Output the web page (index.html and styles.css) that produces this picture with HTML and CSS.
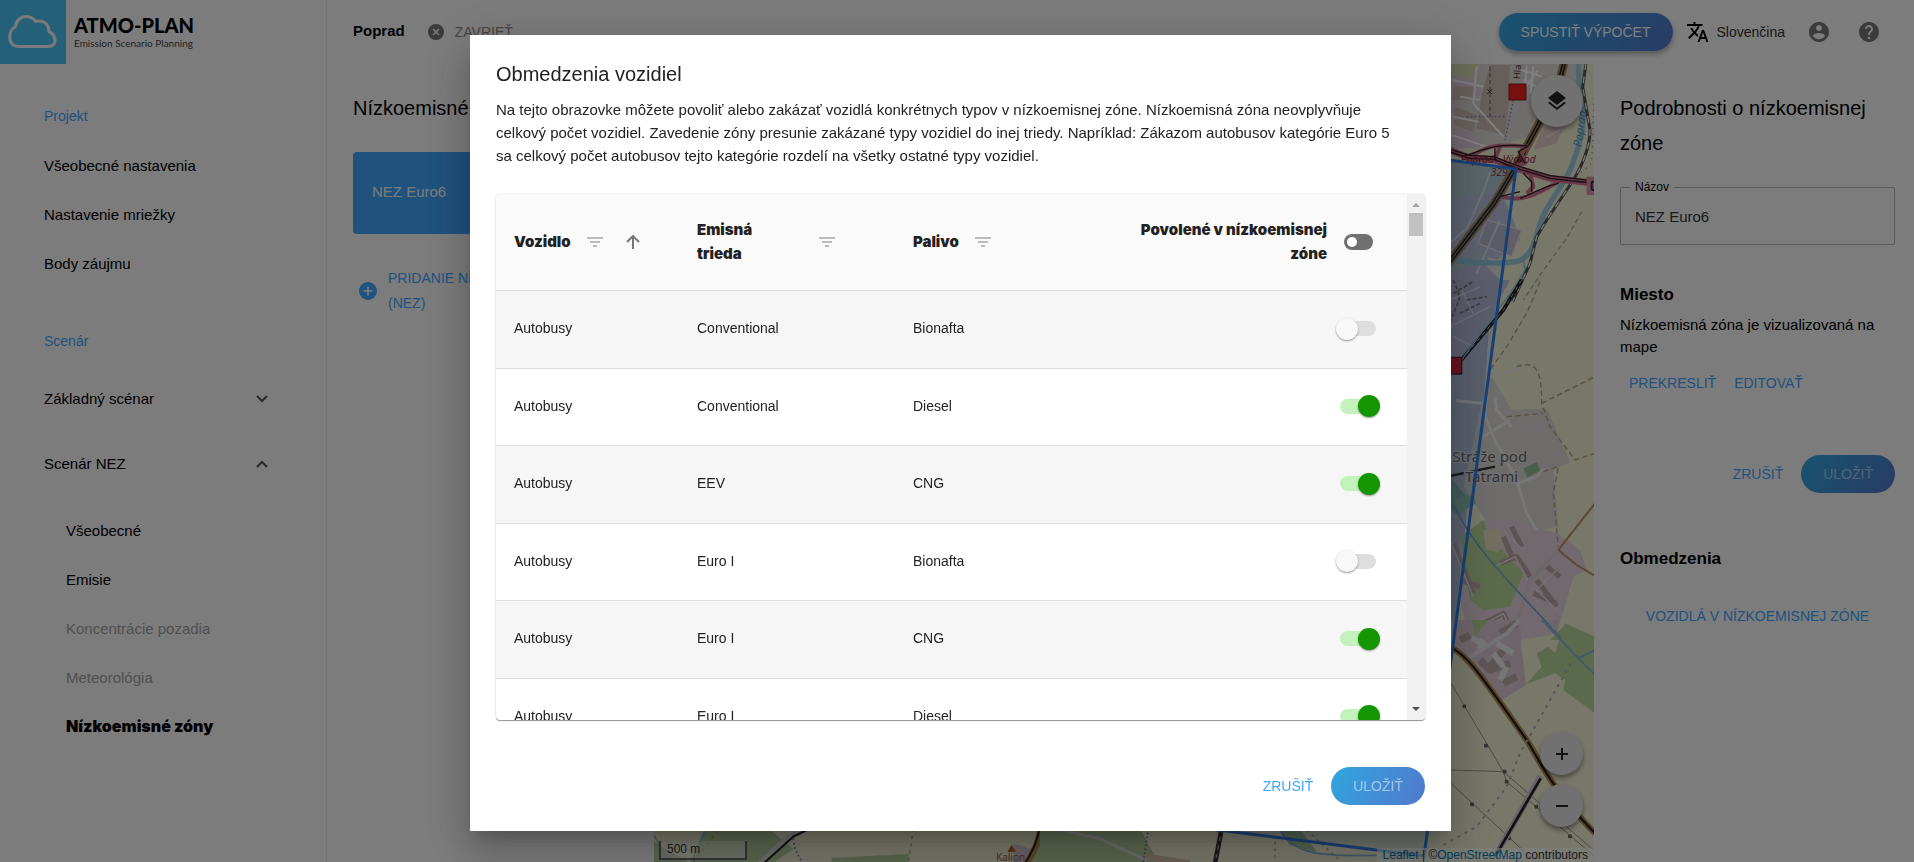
FILE: index.html
```html
<!DOCTYPE html>
<html lang="sk">
<head>
<meta charset="utf-8">
<title>ATMO-PLAN</title>
<link rel="stylesheet" href="styles.css">
</head>
<body>
<div class="app">
  <aside class="sidebar">
    <div class="brand">
      <svg class="brand-mark" viewBox="0 0 66 64" aria-hidden="true"><rect width="66" height="64" fill="#48c0f0"/><path d="M19 46.500C12 46.500 9.500 41.500 9.800 36.500C10 31 13 28 15.500 26.500C16 20.500 21 16.500 26 16.500C30.500 16.500 34 19 36 21.500C43.500 19.500 48.500 24 49 31.500C53 33.500 55 36.500 55 40.500C55 44.500 52 46.500 48 46.500Z" fill="none" stroke="#f4f4f4" stroke-width="3.200" stroke-linejoin="round"/></svg>
      <div class="brand-text">
        <span class="brand-name">ATMO-PLAN</span>
        <span class="brand-sub">Emission Scenario Planning</span>
      </div>
    </div>
    <nav class="nav">
      <span class="nav-group">Projekt</span>
      <a href="#" class="nav-link">Všeobecné nastavenia</a>
      <a href="#" class="nav-link">Nastavenie mriežky</a>
      <a href="#" class="nav-link">Body záujmu</a>
      <span class="nav-group nav-group-next">Scenár</span>
      <button class="nav-toggle" type="button">Základný scénar <svg viewBox="0 0 12 8" aria-hidden="true"><path d="M1 1l5 5 5-5"/></svg></button>
      <button class="nav-toggle" type="button">Scenár NEZ <svg viewBox="0 0 12 8" aria-hidden="true"><path d="M1 7l5-5 5 5"/></svg></button>
      <div class="nav-sub">
        <a href="#" class="nav-link">Všeobecné</a>
        <a href="#" class="nav-link">Emisie</a>
        <a class="nav-link nav-disabled">Koncentrácie pozadia</a>
        <a class="nav-link nav-disabled">Meteorológia</a>
        <a href="#" class="nav-link nav-current">Nízkoemisné zóny</a>
      </div>
    </nav>
  </aside>
  <div class="content">
    <header class="topbar">
      <strong class="project">Poprad</strong>
      <button class="close-project" type="button"><svg viewBox="0 0 16 16" aria-hidden="true"><circle cx="8" cy="8" r="8" fill="#777"/><path d="M5 5l6 6M11 5l-6 6" stroke="#f8f8f8" stroke-width="1.500"/></svg>ZAVRIEŤ</button>
      <div class="topbar-right">
        <button class="btn-pill btn-raised" type="button">SPUSTIŤ VÝPOČET</button>
        <button class="language" type="button"><svg viewBox="2 2 20 20" aria-hidden="true"><path d="M12.870 15.070l-2.540-2.510.03-.03c1.740-1.940 2.980-4.170 3.710-6.530H17V4h-7V2H8v2H1v1.990h11.170C11.500 7.920 10.440 9.750 9 11.350 8.070 10.320 7.300 9.190 6.690 8h-2c.73 1.630 1.730 3.170 2.980 4.560l-5.090 5.020L4 19l5-5 3.110 3.110.76-2.040zM18.500 10h-2L12 22h2l1.120-3h4.750L21 22h2l-4.500-12zm-2.620 7l1.620-4.330L19.120 17h-3.240z"/></svg>Slovenčina</button>
        <button class="icon-btn" type="button" aria-label="Účet"><svg viewBox="2 2 20 20" aria-hidden="true"><path d="M12 2C6.480 2 2 6.480 2 12s4.480 10 10 10 10-4.480 10-10S17.520 2 12 2zm0 3c1.660 0 3 1.340 3 3s-1.340 3-3 3-3-1.340-3-3 1.340-3 3-3zm0 14.200c-2.500 0-4.710-1.280-6-3.220.03-1.990 4-3.080 6-3.080 1.990 0 5.970 1.090 6 3.080-1.290 1.940-3.500 3.220-6 3.220z"/></svg></button>
        <button class="icon-btn" type="button" aria-label="Pomoc"><svg viewBox="2 2 20 20" aria-hidden="true"><path d="M12 2C6.480 2 2 6.480 2 12s4.480 10 10 10 10-4.480 10-10S17.520 2 12 2zm1 17h-2v-2h2v2zm2.070-7.750l-.9.920C13.450 12.900 13 13.500 13 15h-2v-.5c0-1.100.45-2.100 1.170-2.830l1.240-1.260c.37-.36.590-.86.590-1.410 0-1.100-.9-2-2-2s-2 .9-2 2H8c0-2.210 1.790-4 4-4s4 1.790 4 4c0 .88-.36 1.680-.93 2.250z"/></svg></button>
      </div>
    </header>
    <main class="workspace">
      <section class="zones">
        <h1 class="heading">Nízkoemisné zóny</h1>
        <button class="zone-card" type="button">NEZ Euro6</button>
        <button class="zone-add" type="button"><svg viewBox="0 0 18 18" aria-hidden="true"><circle cx="9" cy="9" r="9" fill="#40a4ff"/><path d="M9 4.500v9M4.500 9h9" stroke="#f8f8f8" stroke-width="1.600"/></svg><span>PRIDANIE NÍZKOEMISNEJ ZÓNY (NEZ)</span></button>
      </section>
      <section class="map">
        <svg class="map-canvas" viewBox="654 64 940 798" preserveAspectRatio="xMaxYMin slice" aria-hidden="true">
          <rect x="654" y="64" width="940" height="798" fill="#eeeed4"/>
          <!-- north-east -->
          <g transform="translate(1440 0) scale(.33333)" fill="none" stroke-linejoin="round">
            <path d="M0 190H440L430 330L300 400L200 430L0 450Z" fill="#dedad6"/>
            <path d="M0 190H120L90 230L30 225Z" fill="#d8e0b4"/>
            <path d="M30 225L110 245L120 290L50 300L90 400L140 440L0 450Z" fill="#e4d2e0"/>
            <path d="M150 195h60l-5 120l-10 90l-85-20l15-100z" fill="#ccbcb4"/>
            <path d="M40 260h60v40H40zM45 320l65 25-12 50-55-20z" fill="#d0c2ba"/>
            <path d="M40 240l90 20M60 290l60 10M40 350l75 15M110 200l-10 110 90 100M225 300l70-90M245 210l60 20M250 240l50 25M260 200l-8 100M280 200l-8 80M20 400l120 40" stroke="#fff" stroke-width="6"/>
            <path d="M320 360l70-20-40 90-70 20z" fill="#e4ccc8"/>
            <path d="M0 480L225 510L180 600L120 900H0Z" fill="#bcd0cc"/>
            <path d="M30 600l150-30 40 90 20 60-70 60-60-20-90 60z" fill="#c6c8dc"/>
            <path d="M0 820l130-30 50 50v60H0z" fill="#c8c2dc"/>
            <path d="M140 660l105 30-30 80-100-40z" fill="#c4bcc8" stroke="#e4e4ec" stroke-width="4"/>
            <path d="M150 515l-20 60-50 110-80 70M280 410l70-60M320 410l60-30M180 660l-70 160" stroke="#e6e6ea" stroke-width="6"/>
            <path d="M415 190c0 40 0 70 10 120c15 70-10 130-30 190c-20 50-75 110-95 170c-15 50-20 90-60 112c-40 10-120 10-230-5" stroke="#9accdc" stroke-width="16"/>
            <path d="M250 780l5 30-55 90" stroke="#9accdc" stroke-width="5"/>
            <path d="M438 190l-10 70 22 130c0 50-20 100-50 150l-80 120-30 50-20 80-52 115" stroke="#555" stroke-width="9"/>
            <path d="M438 190l-10 70 22 130c0 50-20 100-50 150l-80 120-30 50-20 80-52 115" stroke="#eee" stroke-width="4" stroke-dasharray="20 20"/>
            <path d="M372 190l-20 80-60 110-70 130-60 100-160 210" stroke="#b08a50" stroke-width="26"/>
            <path d="M372 190l-20 80-60 110-70 130-60 100-160 210" stroke="#222" stroke-width="13"/>
            <path d="M372 190l-20 80-60 110-70 130-60 100-160 210" stroke="#776" stroke-width="4"/>
            <path d="M30 450L90 475L160 478L240 508L330 535L465 550" stroke="#d0708c" stroke-width="20"/>
            <path d="M90 470C140 440 160 430 265 440L245 460L255 490L210 500L165 478L180 440M185 590C240 605 280 590 355 545L270 520L280 560L260 580" stroke="#d0708c" stroke-width="12"/>
            <path d="M30 456L90 475L160 478L240 508L330 535L465 550M30 448L90 466L160 470L240 500L330 527L465 543M75 468C140 445 170 430 265 438L235 455L255 490M165 445V478L210 500M180 590L240 575M355 550C310 560 280 580 240 595M250 520L275 545L275 575" stroke="#2c1c22" stroke-width="4"/>
            <path d="M440 530h25v55h-25z" fill="#e090a8"/>
            <path d="M455 545v25M455 545h10M455 570h10" stroke="#333" stroke-width="6"/>
            <path d="M425 635l-45 80-80 110-50 75" stroke="#b8a890" stroke-width="4" stroke-dasharray="14 10"/>
            <path d="M465 240l-10 250-70 60" stroke="#998" stroke-width="4" stroke-dasharray="4 14"/>
            <path d="M220 300l-25 120M80 350h120" stroke="#7878c8" stroke-width="4" stroke-dasharray="5 7"/>
            <path d="M150 200v150" stroke="#777" stroke-width="4" stroke-dasharray="12 8"/>
            <path d="M142 268l14 14M156 268l-14 14" stroke="#333" stroke-width="3"/>
            <text x="240" y="238" transform="rotate(-86 240 238)" font-size="28" fill="#554030">Hla</text>
            <text x="424" y="442" transform="rotate(-82 424 442)" font-size="34" font-style="italic" fill="#5a90b4">Poprad</text>
            <text x="62" y="490" font-size="31" font-style="italic" fill="#98283e">Poprad - Východ</text>
            <text x="152" y="528" font-size="31" font-style="italic" fill="#98283e">329</text>
          </g>
          <!-- east -->
          <g transform="translate(1440 280) scale(.33333)" fill="none" stroke-linejoin="round">
            <path d="M0 0H210L150 110L130 380L80 700L40 1080H0Z" fill="#bcc4d4"/>
            <path d="M0 0H175L165 100L60 240L0 240Z" fill="#c4bed6"/>
            <path d="M150 280L185 340L215 390L320 385L390 545L340 570L355 740L290 750L150 740L70 620L125 370Z" fill="#dad8d6"/>
            <path d="M60 770L140 720L215 720L350 760L420 810L440 870L400 890L380 960L350 1060L250 1080H90L60 960Z" fill="#e2d2dc"/>
            <path d="M60 770L130 720L150 770L250 880L210 980L130 990L90 960Z" fill="#b8d498"/>
            <path d="M130 750l50-5 12 50-20 22-35-10z" fill="#e4dcc4"/>
            <path d="M30 590l50 60-20 60-30-20z" fill="#88b8b0"/><path d="M40 660l60-15 8 25-50 30z" fill="#94c4b0"/>
            <path d="M250 565l40-18 12 25-40 20z" fill="#94bc98"/>
            <path d="M330 1080l45-45 90 40v5z" fill="#b8d498"/>
            <path d="M40 790l60 150M60 900l60 20M190 770l30 70M215 740l30 60M180 850l50-20 40 60M290 900l60 80M320 860l40 30M280 940l70 30M130 1030l60-30 25 50" stroke="#b8a6a4" stroke-width="16"/>
            <path d="M30 780l70 170M190 750l60 60M165 860l60-30 40 70M350 870l-60 60 60 60M120 1040l70-40 30 60M30 60l90-40M30 140l120-60M40 170l60 30M60 20l40 80" stroke="#e8e2e8" stroke-width="4"/>
            <path d="M40 0l20 50-30 80M80 60l60-10M60 100l60-30M40 40l60-35" stroke="#777" stroke-width="5" stroke-dasharray="12 6"/>
            <path d="M245 0L190 90L60 245" stroke="#222" stroke-width="11"/>
            <path d="M245 0L190 90L60 245" stroke="#aaa" stroke-width="3" stroke-dasharray="12 12"/>
            <path d="M225 20L50 260L40 480" stroke="#94c8dc" stroke-width="4"/>
            <path d="M150 180L135 410L165 480L230 600L260 700L290 750M130 470L210 420M165 350L170 390L215 440M230 610L290 590L310 565M48 362L125 370M150 290L245 265" stroke="#eee" stroke-width="9"/>
            <path d="M350 815L270 900L245 990L200 1080" stroke="#d8d0d4" stroke-width="13"/>
            <path d="M355 810L410 855L465 888M355 810L465 670" stroke="#b89060" stroke-width="6"/>
            <path d="M300 5L260 100L200 200L150 270M230 260C290 240 305 270 305 370L330 440L405 540L465 520M305 370L465 290M200 410L310 400M310 575L355 560L340 640L355 800" stroke="#b4a078" stroke-width="4" stroke-dasharray="16 10"/>
            <path d="M40 670C90 790 200 900 370 1080" stroke="#70a8d0" stroke-width="5"/>
            <path d="M30 588L165 560" stroke="#333" stroke-width="7"/>
            <path d="M10 232h55v50H10z" fill="#d82030" stroke="#502028" stroke-width="4"/>
            <g fill="#66666a" stroke="#e2e2e2" stroke-width="8" paint-order="stroke" font-size="45"><text x="37" y="546">Stráže pod</text><text x="75" y="607">Tatrami</text></g>
          </g>
          <!-- south-east -->
          <g transform="translate(1440 620) scale(.33333)" fill="none" stroke-linejoin="round">
            <path d="M0 0H240L245 90L258 195L185 240L90 120L33 80Z" fill="#dccbd6"/>
            <path d="M95 0h50l-40 50z" fill="#b8d498"/>
            <path d="M325 0h35l-20 30z" fill="#dccbd6"/>
            <path d="M375 10L465 50V280L370 210L375 180L345 160L260 192L305 140L290 100L325 80L345 100Z" fill="#b6d29a"/>
            <path d="M60 60l30-15M150 140l40-50M120 120l30 30 60-20M190 190l40-20M180 40l50-30" stroke="#baaaa8" stroke-width="22"/>
            <path d="M95 55l35 15-15 20M170 70l50 30M160 100l30 40M200 140l-20 40" stroke="#ececec" stroke-width="18"/>
            <path d="M85 115L200 40L240 0" stroke="#e8e4e8" stroke-width="12"/>
            <path d="M305 0L415 115L465 165M415 115L465 90" stroke="#80b0dc" stroke-width="5"/>
            <path d="M33 84C80 100 140 190 260 360C310 440 330 500 465 640" stroke="#b88c50" stroke-width="19"/>
            <path d="M33 84C80 100 140 190 260 360C310 440 330 500 465 640" stroke="#222" stroke-width="7"/>
            <path d="M33 190L190 455L200 485L465 710M33 450L190 455L460 690M33 490L280 720" stroke="#98988a" stroke-width="3"/>
            <g fill="#777" stroke="#555" stroke-width="3"><path d="M69 255h8v8h-8zM134 373h8v8h-8zM190 451h8v8h-8zM196 481h8v8h-8zM92 549h8v8h-8zM285 556h8v8h-8zM203 651h8v8h-8zM386 645h8v8h-8z"/></g>
            <path d="M392 130L240 400L200 500L110 620L0 680" stroke="#b4a8b4" stroke-width="6" stroke-dasharray="9 15"/>
            <path d="M302 468L165 710" stroke="#c8c4d0" stroke-width="18"/><path d="M302 475L165 710" stroke="#222" stroke-width="8"/>
          </g>
          <!-- south -->
          <g transform="translate(640 822) scale(.33333)" fill="none">
            <path d="M200 0H360L460 80L390 130H150Z" fill="#b4cc9c"/><path d="M42 60l120 70H42zM575 108l230-12v30H575z" fill="#b4cc9c"/>
            <path d="M200 20L150 125M42 40L90 130" stroke="#94c0d4" stroke-width="5"/>
            <path d="M500 20L440 50L360 125" stroke="#d8d8d8" stroke-width="18"/><path d="M500 24L460 44L370 125" stroke="#222" stroke-width="6"/>
            <path d="M460 50l5 30 20 40" stroke="#6c6cb8" stroke-width="5" stroke-dasharray="5 8"/>
            <path d="M820 20L805 120M160 120l80-100" stroke="#ab9c70" stroke-width="4" stroke-dasharray="10 12"/>
            <path d="M1120 65l70 20-20 40h-50z" fill="#d4c4d0"/>
            <path d="M1195 20L1500 20L1560 130H1160Z" fill="#b4cc9c"/>
            <path d="M1205 0C1200 60 1180 90 1160 125" stroke="#b88c50" stroke-width="20"/><path d="M1200 0C1195 60 1175 90 1155 125" stroke="#222" stroke-width="6"/>
            <path d="M1115 68l13 22h-26z" fill="#b8602c"/>
            <text x="1068" y="118" font-size="30" fill="#886048">Kalion</text>
          </g>
          <g transform="translate(1040 822) scale(.33333)" fill="none">
            <path d="M320 95L450 115V130H310Z" fill="#d8bca4"/><path d="M0 25h60l250 80 60 25H0z" fill="#b4cc9c"/>
            <path d="M50 20L180 50L320 115" stroke="#d8d4d8" stroke-width="9"/>
            <path d="M325 20l-15 100" stroke="#6c6cb8" stroke-width="5" stroke-dasharray="5 7"/>
            <path d="M545 20L525 125" stroke="#333" stroke-width="14"/><path d="M545 20L525 125" stroke="#aaa" stroke-width="4" stroke-dasharray="12 14"/>
            <path d="M720 20h60l50 70-80-20z" fill="#a8c898"/>
            <path d="M720 25C760 90 820 105 1010 100" stroke="#80b0d8" stroke-width="5"/>
            <path d="M800 25l100 90M705 60v50" stroke="#999" stroke-width="4" stroke-dasharray="8 12"/>
          </g>
          <path d="M1300 140L1516 169L1453 645L1424 856L1210 829Z" fill="#3388ff" fill-opacity=".08" stroke="#3080ec" stroke-width="3"/>
          <rect x="1509" y="84" width="17" height="16" fill="#f02020" stroke="#702020"/>
        </svg>
        <button class="map-btn map-layers" type="button" aria-label="Vrstvy"><svg viewBox="3 2 18 20" width="18" height="20" aria-hidden="true"><path d="M12 18.540l-7.370-5.730L3 14.070l9 7 9-7-1.630-1.270-7.380 5.740zM12 16l7.360-5.730L21 9l-9-7-9 7 1.630 1.270L12 16z" fill="#222"/></svg></button>
        <div class="map-zoom">
          <button class="map-btn" type="button" aria-label="Priblížiť"><svg viewBox="0 0 12 12" width="12" height="12"><path d="M6 0v12M0 6h12" stroke="#222" stroke-width="2"/></svg></button>
          <button class="map-btn" type="button" aria-label="Oddialiť"><svg viewBox="0 0 12 12" width="12" height="12"><path d="M0 6h12" stroke="#222" stroke-width="2"/></svg></button>
        </div>
        <div class="map-scale">500 m</div>
        <div class="map-credit"><a href="#">Leaflet</a> | ©<a href="#">OpenStreetMap</a> contributors</div>
      </section>
      <aside class="details">
        <h2 class="heading">Podrobnosti o nízkoemisnej zóne</h2>
        <fieldset class="field"><legend><label for="zone-name">Názov</label></legend><input id="zone-name" type="text" value="NEZ Euro6"></fieldset>
        <h3 class="subheading">Miesto</h3>
        <p class="details-text">Nízkoemisná zóna je vizualizovaná na mape</p>
        <div class="place-actions"><button class="btn-text" type="button">PREKRESLIŤ</button><button class="btn-text" type="button">EDITOVAŤ</button></div>
        <div class="save-actions"><button class="btn-text" type="button">ZRUŠIŤ</button><button class="btn-pill" type="button" disabled>ULOŽIŤ</button></div>
        <h3 class="subheading">Obmedzenia</h3>
        <button class="btn-text vehicles-link" type="button">VOZIDLÁ V NÍZKOEMISNEJ ZÓNE</button>
      </aside>
    </main>
  </div>
</div>

<div class="overlay">
  <div class="dialog" role="dialog" aria-modal="true" aria-labelledby="dialog-title">
    <h2 id="dialog-title" class="dialog-title">Obmedzenia vozidiel</h2>
    <p class="dialog-text">Na tejto obrazovke môžete povoliť alebo zakázať vozidlá konkrétnych typov v nízkoemisnej zóne. Nízkoemisná zóna neovplyvňuje celkový počet vozidiel. Zavedenie zóny presunie zakázané typy vozidiel do inej triedy. Napríklad: Zákazom autobusov kategórie Euro 5 sa celkový počet autobusov tejto kategórie rozdelí na všetky ostatné typy vozidiel.</p>
    <div class="table-box">
      <div class="table-view">
        <table class="vehicles">
          <colgroup><col class="col-vehicle"><col class="col-class"><col class="col-fuel"><col></colgroup>
          <thead><tr>
            <th scope="col"><div class="th">Vozidlo <button type="button" class="th-btn" aria-label="Filter"><svg viewBox="0 0 16 10" width="16" height="10"><path d="M0 1h16M3 5h10M6 9h4"/></svg></button><button type="button" class="th-btn th-sort" aria-label="Zoradiť"><svg viewBox="0 0 14 14" width="14" height="14"><path d="M7 14V1M1 7l6-6 6 6"/></svg></button></div></th>
            <th scope="col"><div class="th"><span class="th-label">Emisná trieda</span> <button type="button" class="th-btn" aria-label="Filter"><svg viewBox="0 0 16 10" width="16" height="10"><path d="M0 1h16M3 5h10M6 9h4"/></svg></button></div></th>
            <th scope="col"><div class="th">Palivo <button type="button" class="th-btn" aria-label="Filter"><svg viewBox="0 0 16 10" width="16" height="10"><path d="M0 1h16M3 5h10M6 9h4"/></svg></button></div></th>
            <th scope="col"><div class="th th-end"><span class="th-allowed">Povolené v nízkoemisnej zóne</span><button type="button" class="th-all" aria-label="Prepnúť všetko"><svg viewBox="0 0 29 16" width="29" height="16"><rect width="29" height="16" rx="8" fill="#707070"/><circle cx="8" cy="8" r="5" fill="#fff"/></svg></button></div></th>
          </tr></thead>
          <tbody>
            <tr><td>Autobusy</td><td>Conventional</td><td>Bionafta</td><td><input class="switch" type="checkbox" aria-label="Povolené"></td></tr>
            <tr><td>Autobusy</td><td>Conventional</td><td>Diesel</td><td><input class="switch" type="checkbox" aria-label="Povolené" checked></td></tr>
            <tr><td>Autobusy</td><td>EEV</td><td>CNG</td><td><input class="switch" type="checkbox" aria-label="Povolené" checked></td></tr>
            <tr><td>Autobusy</td><td>Euro I</td><td>Bionafta</td><td><input class="switch" type="checkbox" aria-label="Povolené"></td></tr>
            <tr><td>Autobusy</td><td>Euro I</td><td>CNG</td><td><input class="switch" type="checkbox" aria-label="Povolené" checked></td></tr>
            <tr><td>Autobusy</td><td>Euro I</td><td>Diesel</td><td><input class="switch" type="checkbox" aria-label="Povolené" checked></td></tr>
          </tbody>
        </table>
      </div>
      <div class="scrollbar" aria-hidden="true">
        <svg viewBox="0 0 8 4" width="8" height="4"><path d="M0 4l4-4 4 4z" fill="#a3a3a3"/></svg>
        <div class="scroll-thumb"></div>
        <svg viewBox="0 0 8 4" width="8" height="4"><path d="M0 0l4 4 4-4z" fill="#505050"/></svg>
      </div>
    </div>
    <div class="dialog-actions"><button class="btn-text" type="button">ZRUŠIŤ</button><button class="btn-pill" type="button" disabled>ULOŽIŤ</button></div>
  </div>
</div>
</body>
</html>
```
FILE: styles.css
```css
* { box-sizing: border-box; }
body {
  margin: 0;
  font: 15px/22px "Liberation Sans", Arial, sans-serif;
  color: #000;
  background: #f8f8f8;
}
button {
  padding: 0;
  border: 0;
  background: none;
  font: inherit;
  color: inherit;
  cursor: pointer;
}
a { color: inherit; text-decoration: none; }
h1, h2, h3, p { margin: 0; }
svg { display: block; flex: none; }

.app { display: flex; height: 100vh; overflow: hidden; }

/* Sidebar */
.sidebar { flex: none; width: 327px; border-right: 1px solid #e6e6e6; }
.brand { display: flex; gap: 8px; height: 64px; }
.brand-mark { width: 66px; height: 64px; }
.brand-text { display: flex; flex-direction: column; padding-top: 14px; }
.brand-name { font: 900 20px/22px Lato, sans-serif; }
.brand-sub { font: 10px/14px Lato, sans-serif; color: #444; }
.nav { display: flex; flex-direction: column; padding: 27px 58px 0 44px; }
.nav-group { font-size: 14px; line-height: 50px; color: #40a4ff; }
.nav-group-next { margin-top: 28px; }
.nav-link { line-height: 49px; }
.nav-toggle {
  display: flex;
  justify-content: space-between;
  align-items: center;
  height: 65px;
  text-align: left;
}
.nav-toggle svg { width: 12px; height: 8px; fill: none; stroke: #555; stroke-width: 2; }
.nav-sub { display: flex; flex-direction: column; padding: 10px 0 0 22px; }
.nav-disabled { color: #a0a0a0; }
.nav-current { font-family: Inter, sans-serif; font-size: 16px; font-weight: 900; }

/* Top bar */
.content { flex: 1; min-width: 0; display: flex; flex-direction: column; }
.topbar { flex: none; display: flex; align-items: center; height: 64px; padding: 0 35px 0 26px; font-size: 14px; }
.project { padding-bottom: 2px; font-size: 15px; line-height: 20px; }
.close-project { display: flex; align-items: center; gap: 11px; margin-left: 23px; color: #888; }
.close-project svg { width: 16px; height: 16px; }
.topbar-right { display: flex; align-items: center; margin-left: auto; }
.language { display: flex; align-items: center; gap: 9px; margin-left: 14px; color: #333; }
.language svg { width: 21px; height: 20px; }
.icon-btn { margin-left: 30px; }
.language + .icon-btn { margin-left: 24px; }
.icon-btn svg { width: 20px; height: 20px; fill: #777; }

.btn-pill {
  height: 38px;
  padding: 0 22px;
  border-radius: 19px;
  background: linear-gradient(120deg, #30a6de, #5278cc);
  color: #fff;
  font-size: 14px;
}
.btn-pill:disabled { color: rgba(255, 255, 255, .5); }
.btn-raised { box-shadow: 0 3px 5px rgba(0, 0, 0, .3); }
.btn-text { color: #40a4ff; font-size: 14px; }

/* Workspace */
.workspace { flex: 1; min-height: 0; display: flex; }
.heading { font-size: 20px; line-height: 35px; font-weight: 400; }
.zones { flex: none; display: flex; flex-direction: column; width: 327px; padding: 27px 26px; }
.zone-card {
  height: 82px;
  margin-top: 26px;
  padding: 0 19px 2px;
  border-radius: 4px;
  background: #40a4fc;
  color: #f8f8f8;
  text-align: left;
}
.zone-add {
  display: flex;
  align-items: center;
  gap: 11px;
  margin-top: 32px;
  padding-left: 6px;
  color: #40a4ff;
  font-size: 14px;
  line-height: 25px;
  text-align: left;
}
.zone-add svg { width: 18px; height: 18px; }

.map { position: relative; flex: 1; min-width: 0; overflow: hidden; }
.map-canvas { width: 100%; height: 100%; font-family: "Noto Sans", sans-serif; }
.map-btn {
  display: grid;
  place-items: center;
  width: 43px;
  height: 43px;
  border-radius: 50%;
  background: #e2e2e2;
  box-shadow: 0 3px 5px rgba(0, 0, 0, .4);
}
.map-layers { position: absolute; top: 11px; right: 11px; width: 52px; height: 52px; }
.map-zoom { position: absolute; right: 11px; bottom: 35px; display: grid; gap: 9px; }
.map-scale {
  position: absolute;
  left: 5px;
  bottom: 2px;
  width: 88px;
  padding: 0 6px;
  border: 2px solid #666;
  border-top: 0;
  background: rgba(255, 255, 255, .4);
  font-size: 12px;
  line-height: 17px;
  color: #333;
}
.map-credit {
  position: absolute;
  right: 0;
  bottom: 0;
  padding: 0 6px;
  background: rgba(255, 255, 255, .6);
  font-size: 12px;
  line-height: 14px;
  color: #333;
}
.map-credit a { color: #0078a8; }

/* Details */
.details { flex: none; display: flex; flex-direction: column; width: 320px; padding: 27px 19px 26px 26px; }
.field { height: 65px; margin: 19px 0 0; padding: 0 14px; border: 1px solid #b4b4b4; border-radius: 2px; min-width: 0; }
.field legend { margin-left: -5px; padding: 0 5px; font-size: 12px; line-height: 14px; }
.field input { width: 100%; height: 44px; padding: 0; border: 0; outline: 0; background: none; font: inherit; color: #333; }
.subheading { font-size: 17px; line-height: 22px; }
.field + .subheading { margin-top: 39px; }
.details-text { margin-top: 8px; }
.place-actions { display: flex; gap: 18px; margin: 14px 0 0 9px; }
.save-actions { display: flex; justify-content: flex-end; gap: 18px; margin: 61px 0 55px; }
.vehicles-link { align-self: center; margin-top: 35px; }

/* Dialog */
.overlay {
  position: fixed;
  inset: 0;
  display: flex;
  justify-content: center;
  align-items: center;
  padding: 3px 0 0 7px;
  background: rgba(0, 0, 0, .5);
}
.dialog {
  width: 981px;
  padding: 26px;
  background: #fff;
  color: #222;
  box-shadow: 0 11px 15px -7px rgba(0, 0, 0, .2), 0 24px 38px 3px rgba(0, 0, 0, .14), 0 9px 46px 8px rgba(0, 0, 0, .12);
}
.dialog-title { font-size: 20px; line-height: 26px; font-weight: 400; }
.dialog-text { margin-top: 11px; padding-right: 16px; line-height: 23px; }
.table-box {
  display: flex;
  height: 526px;
  margin-top: 27px;
  border-radius: 4px;
  overflow: hidden;
  box-shadow: 0 1px 1px rgba(0, 0, 0, .4), 0 0 2px rgba(0, 0, 0, .14);
}
.table-view { flex: 1; overflow: hidden; }
.vehicles { width: 100%; border-spacing: 0; table-layout: fixed; font-size: 14px; }
.col-vehicle { width: 183px; }
.col-class { width: 216px; }
.col-fuel { width: 200px; }
.vehicles th, .vehicles td { padding: 0 0 2px 18px; border-bottom: 1px solid #dedede; text-align: left; }
.vehicles th { height: 97px; padding-bottom: 0; background: #fafafa; font: 900 15px/24px Inter, sans-serif; }
.vehicles th:last-child { padding-right: 34px; }
.vehicles td:last-child { padding-right: 27px; text-align: right; }
.vehicles tbody tr { height: 77px; }
.vehicles tbody tr:nth-child(odd) { height: 78px; background: #f6f6f6; }
.th { display: flex; align-items: center; }
.th-btn { margin-left: 16px; }
.th-btn svg { fill: none; stroke: #bbb; stroke-width: 2; }
.th-sort { margin-left: 23px; }
.th-sort svg { stroke: #777; }
.th-label { width: 106px; padding-right: 40px; }
.th-end { justify-content: flex-end; text-align: right; gap: 17px; }
.th-allowed { max-width: 204px; }

.switch {
  appearance: none;
  display: inline-grid;
  align-items: center;
  justify-content: start;
  width: 44px;
  height: 22px;
  margin: 0;
  vertical-align: middle;
}
.switch::before {
  content: "";
  grid-area: 1 / 1;
  width: 36px;
  height: 15px;
  margin-left: 4px;
  border-radius: 8px;
  background: #dedede;
}
.switch::after {
  content: "";
  grid-area: 1 / 1;
  width: 22px;
  height: 22px;
  border-radius: 50%;
  background: #f8f8f8;
  box-shadow: 0 1px 2px rgba(0, 0, 0, .4);
}
.switch:checked::before { background: #c4f2bc; }
.switch:checked::after { margin-left: 22px; background: #149600; }

.scrollbar {
  display: flex;
  flex-direction: column;
  align-items: center;
  width: 18px;
  padding: 9px 0;
  background: #f1f1f1;
}
.scroll-thumb { width: 14px; height: 23px; margin: 6px 0 auto; background: #c1c1c1; }
.dialog-actions { display: flex; justify-content: flex-end; gap: 18px; margin-top: 47px; }
```
